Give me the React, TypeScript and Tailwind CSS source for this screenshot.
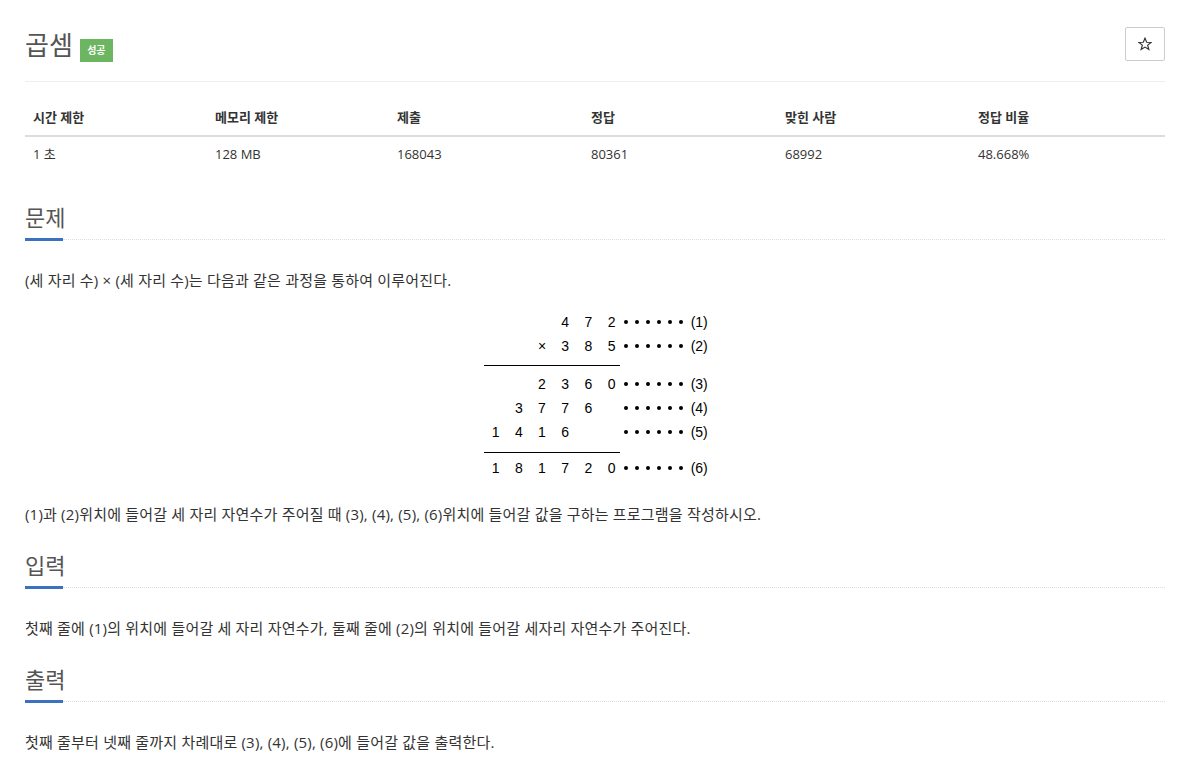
import React from "react";

const FONT = '"Open Sans", "Noto Sans CJK KR", sans-serif';
const DIA = '"Liberation Sans", "DejaVu Sans", sans-serif';

function Heading({ children }: { children: React.ReactNode }) {
  return (
    <div>
      <h2 className="text-[22px] leading-[30px] text-[#555] font-normal">{children}</h2>
      <div className="mt-[6px] flex items-center">
        <div className="w-[38px] h-[3px] bg-[#3a72c0]" />
        <div className="flex-1 border-t border-dotted border-[#dddddd]" />
      </div>
    </div>
  );
}

function Dots() {
  return (
    <div className="flex items-center gap-[7.5px]">
      {[0, 1, 2, 3, 4, 5].map((i) => (
        <div key={i} className="w-[3.5px] h-[3.5px] rounded-full bg-black" />
      ))}
    </div>
  );
}

function Row({ cells, label }: { cells: string[]; label?: string }) {
  return (
    <div className="flex items-center h-[24px]">
      {cells.map((c, i) => (
        <div key={i} className="w-[23.2px] text-center">
          {c}
        </div>
      ))}
      {label && (
        <>
          <div className="ml-[1px]">
            <Dots />
          </div>
          <div className="ml-[8px] text-[14px]">{label}</div>
        </>
      )}
    </div>
  );
}

function Diagram() {
  return (
    <div className="mt-[18px] w-[238px] mx-auto pl-[8px] text-black text-[14px]" style={{ fontFamily: DIA }}>
      <Row cells={["", "", "", "4", "7", "2"]} label="(1)" />
      <Row cells={["", "", "×", "3", "8", "5"]} label="(2)" />
      <div className="mt-[7px] mb-[6px] w-[136px] h-[1px] bg-black" />
      <Row cells={["", "", "2", "3", "6", "0"]} label="(3)" />
      <Row cells={["", "3", "7", "7", "6", ""]} label="(4)" />
      <Row cells={["1", "4", "1", "6", "", ""]} label="(5)" />
      <div className="mt-[8px] mb-[3px] w-[136px] h-[1px] bg-black" />
      <Row cells={["1", "8", "1", "7", "2", "0"]} label="(6)" />
    </div>
  );
}

export default function App() {
  const headers = ["시간 제한", "메모리 제한", "제출", "정답", "맞힌 사람", "정답 비율"];
  const values = ["1 초", "128 MB", "168043", "80361", "68992", "48.668%"];
  return (
    <div className="bg-white min-h-[772px] w-[1195px]" style={{ fontFamily: FONT }}>
      <div className="pl-[25px] pr-[30px] pt-[27px] pb-[20px]">
        <div className="flex justify-between items-start">
          <div className="flex items-start">
            <h1 className="text-[26px] leading-[36px] text-[#555] font-normal">곱셈</h1>
            <span className="ml-[7px] mt-[12px] w-[33px] h-[23px] flex items-center justify-center bg-[#6cb661] text-white text-[10px] font-bold">
              성공
            </span>
          </div>
          <button className="w-[40px] h-[34px] border border-[#cccccc] rounded-[2px] bg-white flex items-center justify-center">
            <svg width="14" height="14" viewBox="0 0 24 24" fill="none" stroke="#333" strokeWidth="2" strokeLinejoin="miter">
              <polygon points="12,2 14.9,9 22.5,9.3 16.6,14 18.6,21.5 12,17.3 5.4,21.5 7.4,14 1.5,9.3 9.1,9" />
            </svg>
          </button>
        </div>
        <div className="mt-[18px] border-t border-[#eeeeee]" />

        <div className="mt-[18px] text-[13px] text-[#333]">
          <div className="grid grid-cols-[182px_182px_194px_194px_193px_195px] border-b-2 border-[#dddddd]">
            {headers.map((h) => (
              <div key={h} className="h-[35px] flex items-center px-[8px] font-bold">
                {h}
              </div>
            ))}
          </div>
          <div className="grid grid-cols-[182px_182px_194px_194px_193px_195px]">
            {values.map((v) => (
              <div key={v} className="h-[35px] flex items-center px-[8px]">
                {v}
              </div>
            ))}
          </div>
        </div>

        <div className="mt-[30px]">
          <Heading>문제</Heading>
          <p className="mt-[27px] text-[15px] leading-[24px] tracking-[0.2px] text-[#333]">
            (세 자리 수) × (세 자리 수)는 다음과 같은 과정을 통하여 이루어진다.
          </p>
          <Diagram />
          <p className="mt-[22px] text-[15px] leading-[24px] tracking-[0.2px] text-[#333]">
            (1)과 (2)위치에 들어갈 세 자리 자연수가 주어질 때 (3), (4), (5), (6)위치에 들어갈 값을 구하는 프로그램을 작성하시오.
          </p>
        </div>

        <div className="mt-[24px]">
          <Heading>입력</Heading>
          <p className="mt-[27px] text-[15px] leading-[24px] tracking-[0.2px] text-[#333]">
            첫째 줄에 (1)의 위치에 들어갈 세 자리 자연수가, 둘째 줄에 (2)의 위치에 들어갈 세자리 자연수가 주어진다.
          </p>
        </div>

        <div className="mt-[24px]">
          <Heading>출력</Heading>
          <p className="mt-[27px] text-[15px] leading-[24px] tracking-[0.2px] text-[#333]">
            첫째 줄부터 넷째 줄까지 차례대로 (3), (4), (5), (6)에 들어갈 값을 출력한다.
          </p>
        </div>
      </div>
    </div>
  );
}
